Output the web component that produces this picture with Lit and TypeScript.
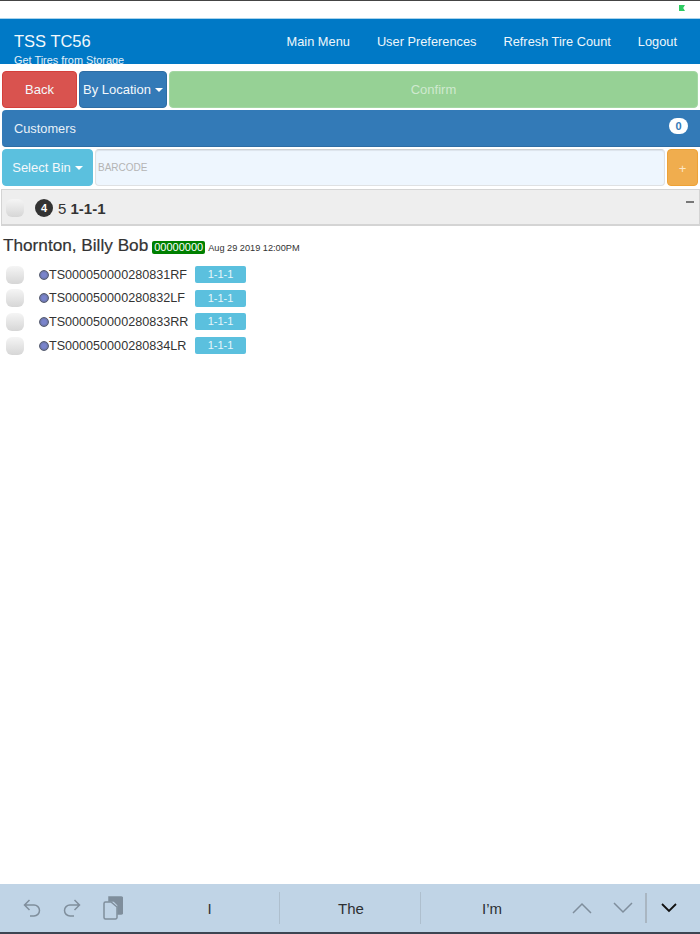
import { LitElement, html, css } from "lit";
import { customElement } from "lit/decorators.js";

const tires = [
  "TS000050000280831RF",
  "TS000050000280832LF",
  "TS000050000280833RR",
  "TS000050000280834LR",
];
const navLinks = ["Main Menu", "User Preferences", "Refresh Tire Count", "Logout"];

@customElement("app-root")
export class AppRoot extends LitElement {
  static styles = css`
    :host {
      display: flex;
      flex-direction: column;
      height: 934px;
      overflow: hidden;
      background: #fff;
      color: #333;
      font-family: "Liberation Sans", Arial, sans-serif;
      font-size: 14px;
    }
    .status {
      flex: none;
      height: 18px;
      border-top: 1px solid #444;
      box-sizing: border-box;
      display: flex;
      justify-content: flex-end;
      padding: 4px 15px 0 0;
    }
    .status i {
      width: 6px;
      height: 6px;
      background: #2ecc62;
      clip-path: polygon(0 0, 100% 0, 70% 50%, 100% 100%, 0 100%);
    }
    .nav {
      flex: none;
      height: 46px;
      box-sizing: border-box;
      border-top: 1px solid #a9d3ec;
      background: #0079c6;
      color: #fff;
      display: flex;
      justify-content: space-between;
      overflow: hidden;
    }
    .brand {
      padding: 12px 0 0 14px;
    }
    .brand b {
      display: block;
      font-weight: 400;
      font-size: 16.5px;
      line-height: 20px;
      color: #f2f8fc;
    }
    .brand span {
      display: block;
      font-size: 10.9px;
      line-height: 14px;
      margin-top: 2px;
      color: #e2eff8;
    }
    .links {
      display: flex;
      gap: 27px;
      padding: 15px 23px 0 0;
      font-size: 12.8px;
      line-height: 16px;
      color: #eef6fb;
    }
    .content {
      flex: 1;
      padding-top: 7px;
    }
    .btn {
      box-sizing: border-box;
      border-radius: 4px;
      border: 1px solid transparent;
      color: #f4f8fb;
      font-size: 13px;
      display: flex;
      align-items: center;
      justify-content: center;
      white-space: nowrap;
    }
    .row {
      display: flex;
      gap: 2px;
      height: 37px;
      padding: 0 2px;
    }
    .back {
      width: 75px;
      background: #d9534f;
      border-color: #d43f3a;
    }
    .loc {
      width: 88px;
      background: #337ab7;
      border-color: #2e6da4;
    }
    .confirm {
      flex: 1;
      background: #96d195;
      border-color: #a3d7a3;
      color: #cfe9cf;
    }
    .caret {
      display: inline-block;
      margin-left: 4px;
      border-top: 4px solid #fff;
      border-left: 4px solid transparent;
      border-right: 4px solid transparent;
    }
    .customers {
      box-sizing: border-box;
      height: 37px;
      margin: 2px 0 2px 2px;
      padding: 0 10px 0 12px;
      background: #337ab7;
      border-bottom: 1px solid #2e6da4;
      border-radius: 4px 0 0 4px;
      color: #e8f1f8;
      font-size: 12.8px;
      display: flex;
      align-items: center;
      justify-content: space-between;
    }
    .customers em {
      font-style: normal;
      font-weight: 700;
      font-size: 11px;
      color: #337ab7;
      background: #fff;
      border-radius: 10px;
      width: 19px;
      height: 16px;
      line-height: 16px;
      text-align: center;
      margin: 0 2px 4px 0;
    }
    .bin {
      width: 91px;
      background: #5bc0de;
      border-color: #5bc0de;
    }
    .barcode {
      flex: 1;
      box-sizing: border-box;
      min-width: 0;
      background: #eef6fe;
      border: 1px solid #dfe1e3;
      border-top-color: #cfd1d3;
      border-radius: 4px;
      box-shadow: inset 0 1px 1px rgba(0, 0, 0, 0.075);
      padding: 0 2px;
      font-family: inherit;
      font-size: 10px;
      color: #555;
      outline: none;
    }
    .barcode::placeholder {
      color: #b4b4b4;
    }
    .plus {
      width: 31px;
      background: #f0ad4e;
      border-color: #eea236;
      color: #fbe6c6;
      padding-top: 2px;
    }
    .section {
      box-sizing: border-box;
      height: 37px;
      margin: 3px 0 0 1px;
      padding: 2px 0 0 4px;
      background: #eee;
      border: 1px solid #d4d4d4;
      border-bottom-width: 2px;
      display: flex;
      align-items: center;
      position: relative;
    }
    .check {
      flex: none;
      box-sizing: border-box;
      width: 18px;
      height: 18px;
      border-radius: 6px;
      background: linear-gradient(#f5f5f5, #d6d6d6);
    }
    .count {
      margin-left: 11px;
      width: 18px;
      height: 18px;
      line-height: 18px;
      text-align: center;
      border-radius: 50%;
      background: #333;
      color: #fff;
      font-size: 11px;
      font-weight: 700;
    }
    .title {
      margin-left: 5px;
      font-size: 15px;
    }
    .collapse {
      position: absolute;
      right: 5px;
      top: 11px;
      width: 8px;
      height: 2px;
      background: #777;
    }
    .customer {
      display: flex;
      align-items: baseline;
      margin: 8px 0 0 3px;
      height: 22px;
    }
    .customer h2 {
      margin: 0;
      font-size: 17.2px;
      line-height: 22px;
      font-weight: 400;
      color: #333;
      -webkit-text-stroke: 0.2px #333;
    }
    .code {
      margin-left: 4px;
      padding: 0 2px;
      background: #008000;
      border-radius: 2px;
      color: #fff;
      font-size: 11px;
      line-height: 13px;
    }
    .date {
      margin-left: 3px;
      font-size: 9.2px;
      color: #333;
    }
    .tires {
      list-style: none;
      margin: 7px 0 0;
      padding: 0 0 0 6px;
      display: grid;
      grid-auto-rows: 23.6px;
    }
    .tires li {
      display: flex;
      align-items: center;
    }
    .dot {
      flex: none;
      box-sizing: border-box;
      margin-left: 15px;
      width: 10px;
      height: 10px;
      border-radius: 50%;
      background: radial-gradient(#7a84cc 35%, #5f6686);
      border: 1px solid #555b70;
    }
    .tag {
      font-size: 12.6px;
      width: 146px;
      color: #333;
      box-sizing: border-box;
      padding-right: 8px;
    }
    .bin-tag {
      width: 51px;
      height: 17px;
      line-height: 17px;
      text-align: center;
      border-radius: 2px;
      background: #5bc0de;
      color: #e8f6fb;
      font-size: 11px;
    }
    .keys {
      flex: none;
      height: 50px;
      box-sizing: border-box;
      background: #c0d4e6;
      border-bottom: 2px solid #3d4552;
      display: flex;
      align-items: center;
      color: #333;
    }
    .tools {
      width: 138px;
      flex: none;
      box-sizing: border-box;
      padding-left: 23px;
      display: flex;
      gap: 22px;
      align-items: center;
    }
    .tools svg,
    .arrows svg {
      display: block;
      fill: none;
      stroke: #7f8e9c;
      stroke-width: 1.5;
    }
    .word {
      width: 141px;
      flex: none;
      box-sizing: border-box;
      height: 32px;
      padding-left: 2px;
      line-height: 34px;
      text-align: center;
      font-size: 15px;
      border-left: 1px solid #aebfce;
      color: #2d3033;
    }
    .word.first {
      border-left: none;
    }
    .arrows {
      flex: 1;
      display: flex;
      align-items: center;
      height: 32px;
      padding-left: 11px;
    }
    .arrows .sep {
      width: 2px;
      height: 30px;
      background: #a9b6c2;
      margin: 0 14px 0 12px;
    }
    .arrows svg + svg {
      margin-left: 21px;
    }
    .arrows svg.hide {
      stroke: #111;
      stroke-width: 1.8;
    }
  `;

  render() {
    return html`
      <div class="status"><i></i></div>
      <header class="nav">
        <div class="brand">
          <b>TSS TC56</b>
          <span>Get Tires from Storage</span>
        </div>
        <nav class="links">${navLinks.map((l) => html`<span>${l}</span>`)}</nav>
      </header>
      <main class="content">
        <div class="row">
          <div class="btn back">Back</div>
          <div class="btn loc">By Location<span class="caret"></span></div>
          <div class="btn confirm">Confirm</div>
        </div>
        <div class="customers"><span>Customers</span><em>0</em></div>
        <div class="row">
          <div class="btn bin">Select Bin<span class="caret"></span></div>
          <input class="barcode" placeholder="BARCODE" />
          <div class="btn plus">+</div>
        </div>
        <div class="section">
          <span class="check"></span>
          <span class="count">4</span>
          <span class="title">5 <b>1-1-1</b></span>
          <span class="collapse"></span>
        </div>
        <div class="customer">
          <h2>Thornton, Billy Bob</h2>
          <span class="code">00000000</span>
          <span class="date">Aug 29 2019 12:00PM</span>
        </div>
        <ul class="tires">
          ${tires.map(
            (t) => html`<li>
              <span class="check"></span>
              <span class="dot"></span>
              <span class="tag">${t}</span>
              <span class="bin-tag">1-1-1</span>
            </li>`
          )}
        </ul>
      </main>
      <footer class="keys">
        <div class="tools">
          <svg width="18" height="20" viewBox="0 0 18 20">
            <path d="M6.500 2 1.500 7l5 5M1.500 7H11a5.500 5.500 0 0 1 0 11H7" />
          </svg>
          <svg width="18" height="20" viewBox="0 0 18 20">
            <path d="M11.500 2l5 5-5 5M16.500 7H7a5.500 5.500 0 0 0 0 11h4" />
          </svg>
          <svg width="20" height="24" viewBox="0 0 20 24">
            <path d="M6 1h12a1.500 1.500 0 0 1 1.500 1.500v14a1.500 1.500 0 0 1-1.500 1.500h-3V9l-4-4H6z" fill="#7f8e9c" />
            <path d="M8 6H2.500A1.500 1.500 0 0 0 1 7.500v14A1.500 1.500 0 0 0 2.500 23h10a1.500 1.500 0 0 0 1.500-1.500V11z" />
          </svg>
        </div>
        <span class="word first">I</span>
        <span class="word">The</span>
        <span class="word">I’m</span>
        <div class="arrows">
          <svg width="20" height="12" viewBox="0 0 20 12"><path d="M1 11 10 2l9 9" /></svg>
          <svg width="20" height="12" viewBox="0 0 20 12"><path d="M1 1l9 9 9-9" /></svg>
          <span class="sep"></span>
          <svg class="hide" width="16" height="10" viewBox="0 0 16 10"><path d="M1 1l7 7 7-7" /></svg>
        </div>
      </footer>
    `;
  }
}
